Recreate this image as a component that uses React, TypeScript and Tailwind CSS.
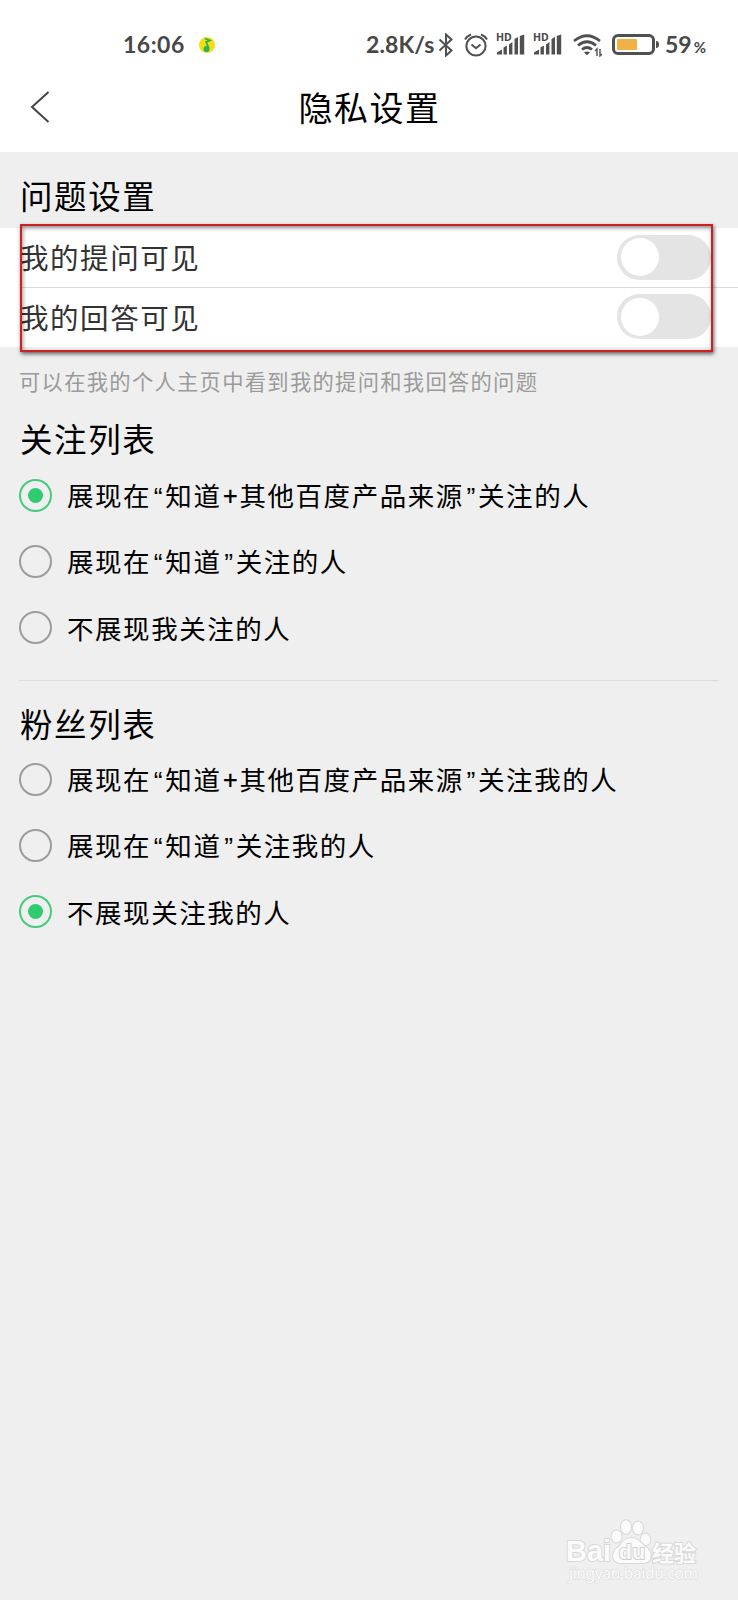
import { useState } from "react";

const followOptions = ["展现在“知道+其他百度产品来源”关注的人", "展现在“知道”关注的人", "不展现我关注的人"];
const fansOptions = ["展现在“知道+其他百度产品来源”关注我的人", "展现在“知道”关注我的人", "不展现关注我的人"];

function SignalIcon() {
  return (
    <div className="relative h-6 w-7 shrink-0">
      <svg className="h-6 w-7" viewBox="0 0 28 24" fill="#505050">
        <path d="M0 21.500v-2l5-3v5zM6.500 21.500v-7l3.400-2v9zM12 21.500V11.500l3.400-2.500V21.500zM17.500 21.500V6L21 4V21.500zM22.800 21.500V3L27.200 1.500v20z" />
      </svg>
      <span className="absolute -top-[3px] -left-px font-['Noto_Sans',sans-serif] text-[10.500px] leading-[14px] font-bold">HD</span>
    </div>
  );
}

function StatusBar() {
  return (
    <div className="flex h-[72px] items-center pt-[17px] pl-[123px] font-['Lato','Noto_Sans',sans-serif] text-[23px] leading-none font-bold text-[#484848]">
      <span className="w-[76px] tracking-[0.5px]">16:06</span>
      <svg className="size-4 shrink-0" viewBox="0 0 16 16">
        <circle cx="8" cy="8" r="8" fill="#f6dc12" />
        <path d="M6 1.500 10.800 3.500 7.200 5l2.500 6" fill="none" stroke="#25b35c" strokeWidth="1.800" />
        <circle cx="7.500" cy="12" r="3" fill="#25b35c" />
      </svg>
      <span className="ml-[151px] w-[72px] tracking-[0.1px] whitespace-nowrap">2.8K/s</span>
      <svg className="h-6 w-4 shrink-0" viewBox="0 0 16 24" fill="none" stroke="#505050" strokeWidth="2">
        <path d="m1.500 6.500 12 11L8 22.500v-21l5.500 5-12 11" />
      </svg>
      <svg className="ml-2.5 h-6 w-6 shrink-0" viewBox="0 0 24 24" fill="none" stroke="#505050" strokeWidth="2">
        <circle cx="12" cy="13" r="9.600" />
        <path d="m7.500 11.500 4.500 3.800 4.500-3.800M1 6.500Q3 3 7 1.500M23 6.500Q21 3 17 1.500" />
      </svg>
      <div className="ml-[9px] flex gap-[9px]">
        <SignalIcon />
        <SignalIcon />
      </div>
      <svg className="ml-[11px] h-6 w-[29px] shrink-0" viewBox="0 0 29 24" fill="none" stroke="#505050" strokeWidth="2.800">
        <path d="M1 8Q14 -2.500 27 8M5 12.500Q14 5 23 12.500M9 16.500Q14 12.500 19 16.500" />
        <path d="M11 19.500Q14 17.500 17 19.500L14 22.300z" fill="#505050" stroke="none" />
        <path d="M24 23v-7l-2 2M27 16v7l2-2" strokeWidth="1.400" />
      </svg>
      <div className="ml-[10px] flex h-[21px] w-[43px] shrink-0 items-center rounded-[6px] border-[3px] border-[#505050] pl-[2px]">
        <div className="h-[11px] w-5 rounded-[1px] bg-[#f1b143]" />
      </div>
      <div className="ml-px h-[7px] w-[3px] rounded-r-sm bg-[#505050]" />
      <span className="ml-[6px]">59</span>
      <span className="ml-[2px] pt-1.5 text-[15px]">%</span>
    </div>
  );
}

function Switch({ label }: { label: string }) {
  const [on, setOn] = useState(false);

  return (
    <button
      role="switch"
      aria-label={label}
      aria-checked={on}
      onClick={() => setOn(!on)}
      className={`flex h-[45px] w-[94px] items-center rounded-full px-1 ${on ? "justify-end bg-[#2fcb70]" : "bg-[#e4e4e4]"}`}
    >
      <span className="size-[38px] rounded-full bg-white" />
    </button>
  );
}

function SectionTitle({ children }: { children: string }) {
  return <h2 className="pl-5 text-[32.500px] leading-[48px] tracking-[1.600px]">{children}</h2>;
}

// Quotes and the plus sign get a fixed advance between the full-width glyphs
function OptionLabel({ text }: { text: string }) {
  return (
    <span className="pt-[2px] text-[26.500px] leading-10 tracking-[1.550px] whitespace-nowrap">
      {text.split(/([“”+])/).map((part, index) => {
        if (part === "+") {
          return (
            <span key={index} className="inline-block w-[18px] text-center font-medium tracking-normal">
              {part}
            </span>
          );
        }
        if (part === "“" || part === "”") {
          return (
            <span key={index} className="inline-block w-[14.200px] text-center font-['Liberation_Sans',sans-serif] tracking-normal">
              {part}
            </span>
          );
        }
        return part;
      })}
    </span>
  );
}

function RadioList({ options, initial }: { options: string[]; initial: number }) {
  const [selected, setSelected] = useState(initial);

  return (
    <div role="radiogroup">
      {options.map((option, index) => (
        <button
          key={option}
          role="radio"
          aria-checked={selected === index}
          onClick={() => setSelected(index)}
          className="flex h-[66.300px] w-full items-center gap-[15px] pl-[19px] text-left"
        >
          <span
            className={`flex size-[33px] shrink-0 items-center justify-center rounded-full border-2 ${
              selected === index ? "border-[#45cb7d]" : "border-[#9c9c9c]"
            }`}
          >
            {selected === index && <span className="size-[15px] rounded-full bg-[#2fcb70]" />}
          </span>
          <OptionLabel text={option} />
        </button>
      ))}
    </div>
  );
}

function Watermark() {
  return (
    <svg
      className="absolute right-[37px] bottom-3 h-[72px] w-[136px]"
      viewBox="0 0 136 72"
      fill="#fbfbfb"
      stroke="#d8d8d8"
      strokeWidth="2"
      paintOrder="stroke"
      fontFamily="Liberation Sans, Noto Sans CJK SC, sans-serif"
    >
      <text x="1" y="45" fontSize="30" fontWeight="700" textLength="45" lengthAdjust="spacingAndGlyphs">Bai</text>
      <ellipse cx="51.500" cy="20.500" rx="5" ry="6" />
      <ellipse cx="61" cy="11" rx="5" ry="6.800" />
      <ellipse cx="73" cy="12" rx="5" ry="6.500" />
      <ellipse cx="80.500" cy="23.500" rx="4.800" ry="6" />
      <path d="M66 22c-8 0-9 7-14 10-5 4-6 14 3 15h24c9-1 8-11 3-15-5-3-8-10-16-10z" />
      <text x="54" y="43" fontSize="21" fontWeight="700" textLength="26" stroke="#cfcfcf">du</text>
      <text x="87" y="45" fontSize="22" fontWeight="700" textLength="44">经验</text>
      <text x="4" y="63" fontSize="15.500" textLength="129" strokeWidth="1" fontFamily="Noto Sans, sans-serif">jingyan.baidu.com</text>
    </svg>
  );
}

export default function App() {
  return (
    <div className="relative h-[1600px] w-[738px] overflow-hidden bg-[#efefef] font-['Noto_Sans','Noto_Sans_CJK_SC',sans-serif] text-black">
      <header className="h-[152px] bg-white">
        <StatusBar />
        <div className="grid h-[70px] grid-cols-[80px_1fr_80px] items-center">
          <button aria-label="返回" className="pl-[30px]">
            <svg className="h-8 w-5" viewBox="0 0 20 32" fill="none" stroke="#444" strokeWidth="2">
              <path d="M18.500 1 2 16l16.500 15" />
            </svg>
          </button>
          <h1 className="pt-[2px] pl-px text-center text-[34px] leading-[50px] tracking-[1.500px]">隐私设置</h1>
        </div>
      </header>

      <section className="relative pt-[21px]">
        <SectionTitle>问题设置</SectionTitle>
        <div className="mt-[7px] bg-white pl-5 text-[28.500px] text-[#333]">
          <div className="flex h-[60px] items-center justify-between border-b border-[#dcdcdc] pr-[27px] pb-px">
            <span className="pt-[3px] tracking-[1.550px]">我的提问可见</span>
            <Switch label="我的提问可见" />
          </div>
          <div className="flex h-[59px] items-center justify-between pr-[27px] pb-[2px]">
            <span className="pt-[3px] tracking-[1.550px]">我的回答可见</span>
            <Switch label="我的回答可见" />
          </div>
        </div>
        {/* highlight frame over both switches */}
        <div className="pointer-events-none absolute top-[72px] left-5 h-[128px] w-[693px] border-x-2 border-y-[2.500px] border-[#cf2020] shadow-[1px_2px_4px_rgba(0,0,0,0.6),inset_1px_2px_4px_rgba(0,0,0,0.4)]" />
        <p className="mt-[19px] pl-[19px] text-[21.300px] leading-8 tracking-[1.280px] text-[#9b9b9b]">
          可以在我的个人主页中看到我的提问和我回答的问题
        </p>
      </section>

      <section className="mt-[18px]">
        <SectionTitle>关注列表</SectionTitle>
        <div className="-mt-[2px]">
          <RadioList options={followOptions} initial={0} />
        </div>
      </section>

      <div className="mt-[19px] mr-[19px] ml-[19px] h-px bg-[#dcdcdc]" />

      <section className="mt-[20px]">
        <SectionTitle>粉丝列表</SectionTitle>
        <div className="-mt-[3px]">
          <RadioList options={fansOptions} initial={2} />
        </div>
      </section>

      <Watermark />
    </div>
  );
}
